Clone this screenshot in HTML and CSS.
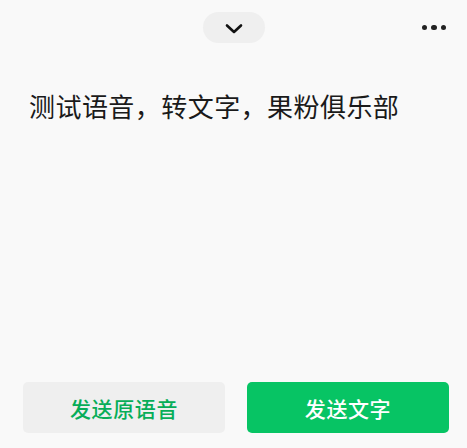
FILE: index.html
```html
<!DOCTYPE html>
<html lang="zh-CN">
<head>
<meta charset="utf-8">
<link rel="stylesheet" href="styles.css">
</head>
<body>
<div class="sheet">
  <header class="top">
    <div class="spacer"></div>
    <button class="collapse" aria-label="收起">
      <svg width="20" height="12" viewBox="0 0 20 12"><path d="M3 2.5 L10 9 L17 2.5" fill="none" stroke="#111" stroke-width="2.6" stroke-linecap="round" stroke-linejoin="round"/></svg>
    </button>
    <div class="more" aria-label="更多"><span></span><span></span><span></span></div>
  </header>
  <p class="result">测试语音，转文字，果粉俱乐部</p>
  <footer class="actions">
    <button class="btn btn-voice">发送原语音</button>
    <button class="btn btn-text">发送文字</button>
  </footer>
</div>
</body>
</html>
```

FILE: styles.css
```css
html, body {
  margin: 0;
  padding: 0;
  background: #f9f9f9;
}
body {
  font-family: "Noto Sans CJK SC", "Noto Sans", sans-serif;
  color: #1a1a1a;
}
.sheet {
  height: 448px;
  display: flex;
  flex-direction: column;
  box-sizing: border-box;
}
.top {
  display: grid;
  grid-template-columns: 1fr auto 1fr;
  align-items: center;
  padding-top: 12px;
}
.collapse {
  width: 62px;
  height: 31px;
  border: none;
  border-radius: 16px;
  background: #efefef;
  display: flex;
  align-items: center;
  justify-content: center;
  padding: 0;
  padding-top: 2px;
}
.collapse svg { display: block; }
.more {
  justify-self: end;
  display: flex;
  gap: 4px;
  padding-right: 21px;
}
.more span {
  width: 5.5px;
  height: 5.5px;
  border-radius: 50%;
  background: #222;
}
.result {
  margin: 45px 0 0 0;
  padding-left: 29px;
  font-size: 26px;
  line-height: 36px;
  letter-spacing: 0.45px;
  color: #1a1a1a;
}
.actions {
  margin-top: auto;
  display: flex;
  gap: 22px;
  padding: 0 18px 15px 23px;
}
.btn {
  flex: 1;
  height: 51px;
  border: none;
  border-radius: 5px;
  font-family: "Noto Sans CJK SC", "Noto Sans", sans-serif;
  font-size: 21px;
  font-weight: 500;
  letter-spacing: 0.6px;
}
.btn-voice {
  background: #efefef;
  color: #07ad58;
}
.btn-text {
  background: #07c464;
  color: #ffffff;
}
```
